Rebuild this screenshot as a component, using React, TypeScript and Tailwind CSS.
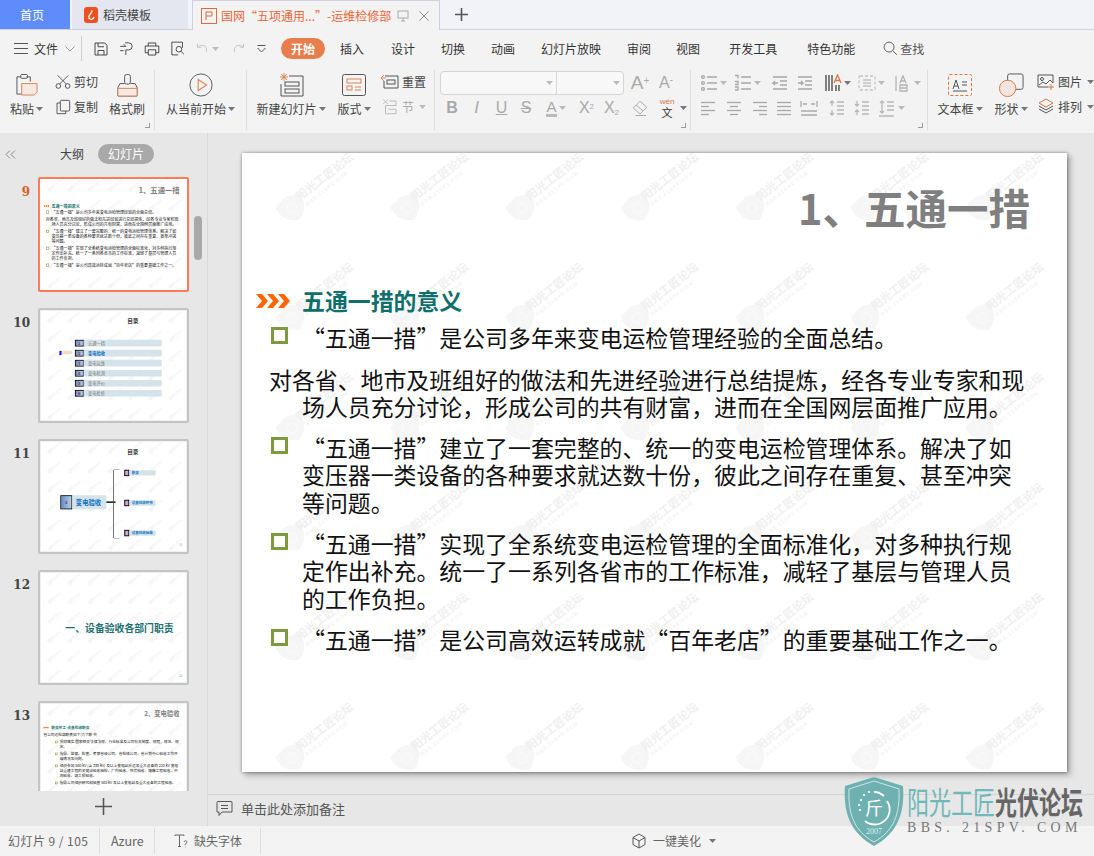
import type { ReactNode } from 'react';

const UI = "font-['Noto_Sans_CJK_SC','Noto_Sans',sans-serif]";

const Svg = ({ children, size = 20, box = 24, cls = 'text-[#444]' }: { children: ReactNode; size?: number; box?: number; cls?: string }) => (
	<svg width={size} height={size} viewBox={`0 0 ${box} ${box}`} fill="none" stroke="currentColor" strokeWidth={1.3} className={`shrink-0 ${cls}`}>
		{children}
	</svg>
);

const Caret = ({ light = false }: { light?: boolean }) => (
	<svg width="7" height="4" viewBox="0 0 7 4" className={`ml-[2px] shrink-0 ${light ? 'text-[#bbb]' : 'text-[#777]'}`}>
		<path d="M0 0h7L3.5 4z" fill="currentColor" />
	</svg>
);

// horizontal line icons for the paragraph group
const Lines = ({ rows }: { rows: [number, number][] }) => (
	<Svg size={18} box={18} cls="text-[#a8a8a8]">
		{rows.map(([a, b], i) => (
			<path key={i} d={`M${a} ${3.5 + i * (12 / (rows.length - 1))}H${b}`} />
		))}
	</Svg>
);

const Big = ({ icon, label, width, caret = true, light = false }: { icon: ReactNode; label: string; width: string; caret?: boolean; light?: boolean }) => (
	<div className={`flex flex-col items-center shrink-0 ${width}`}>
		<div className="h-[30px] flex items-center justify-center">{icon}</div>
		<div className={`h-[18px] flex items-center text-[12px] whitespace-nowrap ${light ? 'text-[#aaa]' : 'text-[#444]'}`}>
			{label}
			{caret && <Caret />}
		</div>
	</div>
);

const Small = ({ icon, label, light = false, caret = false }: { icon: ReactNode; label: string; light?: boolean; caret?: boolean }) => (
	<div className={`h-[25px] pb-[1px] flex items-center gap-[3px] text-[12px] whitespace-nowrap ${light ? 'text-[#aaa]' : 'text-[#444]'}`}>
		{icon}
		{label}
		{caret && <Caret light={light} />}
	</div>
);

const Cell = ({ w, children, caret = false, dark = false }: { w: string; children: ReactNode; caret?: boolean; dark?: boolean }) => (
	<div className={`h-[25px] flex items-center justify-start shrink-0 ${w}`}>
		{children}
		{caret && <Caret light={!dark} />}
	</div>
);

const FontCell = ({ w, children, caret = false }: { w: string; children: ReactNode; caret?: boolean }) => (
	<div className={`h-[25px] flex items-center justify-center shrink-0 ${w}`}>
		{children}
		{caret && <Caret light />}
	</div>
);

const Glyph = ({ children, cls = '' }: { children: ReactNode; cls?: string }) => (
	<span className={`text-[#a9a9a9] font-['Liberation_Sans',sans-serif] leading-none ${cls}`}>{children}</span>
);

const Launcher = () => <div className="absolute right-[4px] bottom-[2px] w-[5px] h-[5px] border-r border-b border-[#999]" />;

const TabBar = () => (
	<div className="h-[30px] flex bg-[#f2f3f8] border-b border-[#cfcfdf] text-[12px]">
		<div className="w-[70px] pr-[6px] bg-[#5e8dfb] text-white flex items-center justify-center text-[12px]">首页</div>
		<div className="w-[116px] ml-[2px] bg-[#e4e7ef] text-[#444] flex items-center pl-[12px] gap-[5px]">
			<svg width="14" height="16" viewBox="0 0 14 16">
				<rect width="14" height="16" rx="3" fill="#f0501e" />
				<path d="M8 3C9 6 4 7 5 11c1 2 4 2 5-1" stroke="#fff" strokeWidth="1.4" fill="none" />
			</svg>
			稻壳模板
		</div>
		<div className="w-[248px] ml-[4px] h-[30px] bg-[#f3f3f3] border border-b-0 border-[#cfcfdf] flex items-center pl-[8px] text-[#e8663a] whitespace-nowrap">
			<svg width="16" height="16" viewBox="0 0 16 16" fill="none" stroke="#e8663a" className="mr-[4px]">
				<rect x=".5" y=".5" width="15" height="15" />
				<path d="M5 12V4h6v4H5" />
			</svg>
			国网“五项通用...”-运维检修部
			<svg width="12" height="12" viewBox="0 0 12 12" fill="none" stroke="#aaa" className="ml-[6px]">
				<rect x="1" y="1" width="10" height="7" />
				<path d="M6 8v3M4 11h4" />
			</svg>
			<svg width="10" height="10" viewBox="0 0 10 10" fill="none" stroke="#888" className="ml-[10px]">
				<path d="M.5.5l9 9M9.5.5l-9 9" />
			</svg>
		</div>
		<div className="ml-[15px] flex items-center">
			<svg width="13" height="13" viewBox="0 0 13 13" stroke="#555" strokeWidth="1.6">
				<path d="M6.5 0v13M0 6.5h13" />
			</svg>
		</div>
	</div>
);

const MenuBar = () => (
	<div className="h-[37px] flex items-center text-[12px] text-[#333] whitespace-nowrap">
		<svg width="14" height="11" viewBox="0 0 14 11" stroke="#555" className="ml-[14px]">
			<path d="M0 .5h14M0 5.5h14M0 10.5h14" />
		</svg>
		<span className="ml-[6px]">文件</span>
		<svg width="10" height="6" viewBox="0 0 10 6" fill="none" stroke="#999" className="ml-[7px]">
			<path d="M.5.5L5 5 9.5.5" />
		</svg>
		<div className="w-px h-[25px] bg-[#ccc] ml-[6px] mr-[10px]" />
		<div className="flex items-center gap-[8px]">
			<Svg size={18}>
				<path d="M4 4h13l3 3v13H4zM8 4v5h8M8 20v-6h8v6" />
			</Svg>
			<Svg size={17}>
				<path d="M10 4h5a5 5 0 010 10h-4v7M3 9h8l-3-3M3 15h5" />
			</Svg>
			<Svg size={18}>
				<path d="M7 8V4h10v4M3 8h18v9h-4M7 17H3V8M7 13h10v7H7z" />
			</Svg>
			<Svg size={17}>
				<path d="M19 11V3H4v18h9" />
				<circle cx="14" cy="13" r="4" />
				<path d="M17 16l4 4" />
			</Svg>
		</div>
		<div className="flex items-center ml-[9px] text-[#bbb]">
			<Svg size={15} cls="text-[#bbb]">
				<path d="M4 4v6h6M4 10c6-6 17-3 14 8" />
			</Svg>
			<Caret light />
			<div className="ml-[12px]">
				<Svg size={15} cls="text-[#bbb]">
					<path d="M20 4v6h-6M20 10C14 4 3 7 6 18" />
				</Svg>
			</div>
		</div>
		<svg width="9" height="8" viewBox="0 0 9 8" fill="none" stroke="#555" className="ml-[11px]">
			<path d="M.5.5h8M.5 3l4 4 4-4" />
		</svg>
		<div className="ml-[15px] w-[44px] h-[21px] rounded-full bg-[#e97e4d] text-white font-bold flex items-center justify-center">开始</div>
		<div className="flex">
			<span className="ml-[15px]">插入</span>
			<span className="ml-[27px]">设计</span>
			<span className="ml-[26px]">切换</span>
			<span className="ml-[26px]">动画</span>
			<span className="ml-[26px]">幻灯片放映</span>
			<span className="ml-[26px]">审阅</span>
			<span className="ml-[25px]">视图</span>
			<span className="ml-[29px]">开发工具</span>
			<span className="ml-[30px]">特色功能</span>
		</div>
		<div className="ml-[27px] flex items-center gap-[1px] text-[#555]">
			<Svg size={17} cls="text-[#555]">
				<circle cx="10" cy="10" r="7" />
				<path d="M15 15l6 6" />
			</Svg>
			查找
		</div>
	</div>
);

const Ribbon = () => (
	<div className="h-[66px] flex relative">
		{/* clipboard */}
		<div className="relative w-[155px] shrink-0 border-r border-[#ddd] my-[3px] flex pl-[3px]">
			<Big
				width="w-[47px]"
				label="粘贴"
				icon={
					<svg width="23" height="22" viewBox="0 0 24 23" fill="none" stroke="#555">
						<path d="M6 3H2v18h8M16 8V3h-4" />
						<rect x="6" y=".5" width="7" height="4" rx="1" />
						<path d="M7 10h16v9l-3 3H7z" fill="#f5e9e2" stroke="#d98552" />
					</svg>
				}
			/>
			<div className="w-[53px] pl-[5px]">
				<Small
					label="剪切"
					icon={
						<Svg size={16}>
							<circle cx="5" cy="18" r="3.500" />
							<circle cx="19" cy="18" r="3.500" />
							<path d="M7 15L20 2M17 15L4 2" />
						</Svg>
					}
				/>
				<Small
					label="复制"
					icon={
						<Svg size={16}>
							<rect x="8" y="2" width="14" height="16" rx="1.5" />
							<path d="M8 6H3v16h13v-4" />
						</Svg>
					}
				/>
			</div>
			<div className="ml-[2px]">
				<Big
					width="w-[44px]"
					label="格式刷"
					caret={false}
					icon={
						<svg width="21" height="23" viewBox="0 0 22 24" fill="none" stroke="#555">
							<rect x="8" y=".5" width="6" height="10" rx="2" />
							<path d="M8 10H3L1 14v9h20v-9l-2-4h-5" />
							<path d="M1 15h20v8H1z" fill="#f5e9e2" stroke="#d98552" />
						</svg>
					}
				/>
			</div>
			<Launcher />
		</div>
		{/* slide show */}
		<div className="w-[92px] shrink-0 border-r border-[#ddd] my-[3px] flex justify-center">
			<Big
				width="w-[80px]"
				label="从当前开始"
				icon={
					<svg width="24" height="24" viewBox="0 0 26 26" fill="none">
						<circle cx="13" cy="13" r="12" stroke="#555" />
						<path d="M10 7l9 6-9 6z" stroke="#e08a58" strokeWidth="1.3" />
					</svg>
				}
			/>
		</div>
		{/* slides */}
		<div className="w-[188px] shrink-0 border-r border-[#ddd] my-[3px] flex pl-[8px]">
			<Big
				width="w-[72px]"
				label="新建幻灯片"
				icon={
					<svg width="25" height="24" viewBox="0 0 25 24" fill="none" stroke="#555">
						<path d="M10 3h14v20H2V11" />
						<rect x="6" y="9" width="14" height="4" />
						<rect x="6" y="16" width="14" height="4" />
						<path d="M5 0v8M1 4h8M2 1l6 6M8 1L2 7" stroke="#d98552" />
					</svg>
				}
			/>
			<div className="ml-[7px]">
				<Big
					width="w-[40px]"
					label="版式"
					icon={
						<svg width="24" height="22" viewBox="0 0 24 22" fill="none" stroke="#555">
							<rect x=".5" y=".5" width="23" height="21" rx="2" />
							<rect x="5" y="5" width="14" height="4" stroke="#d98552" />
							<rect x="5" y="12" width="5" height="4" stroke="#d98552" />
							<path d="M13 13h6M13 16h6" stroke="#d98552" />
						</svg>
					}
				/>
			</div>
			<div className="ml-[7px]">
				<Small
					label="重置"
					icon={
						<svg width="18" height="18" viewBox="0 0 18 18" fill="none" stroke="#555">
							<path d="M4 3h13v12H3V8" />
							<rect x="6" y="7" width="8" height="4" />
							<path d="M0 5h5M3 2L0 5l3 3" stroke="#d98552" />
						</svg>
					}
				/>
				<Small
					light
					caret
					label="节"
					icon={
						<Svg size={18} cls="text-[#bbb]">
							<path d="M3 2l6 6M9 2L3 8M11 4h9v6H6v11h14v-6H10" />
						</Svg>
					}
				/>
			</div>
		</div>
		{/* font */}
		<div className="relative w-[256px] shrink-0 border-r border-[#ddd] my-[3px] pl-[5px]">
			<div className="h-[25px] flex items-center">
				<div className="w-[184px] h-[24px] flex rounded-[4px] border border-[#d5d5d5] bg-[#f8f8f8]">
					<div className="w-[116px] border-r border-[#d5d5d5] flex items-center justify-end pr-[3px]">
						<Caret light />
					</div>
					<div className="flex-1 flex items-center justify-end pr-[3px]">
						<Caret light />
					</div>
				</div>
				<div className="w-[28px] ml-[2px] flex justify-center text-[#aaa] font-['Liberation_Sans',sans-serif]">
					<span className="text-[19px] leading-none font-light">
						A<sup className="text-[10px]">+</sup>
					</span>
				</div>
				<div className="w-[24px] flex justify-center text-[#aaa] font-['Liberation_Sans',sans-serif]">
					<span className="text-[16px] leading-none">
						A<sup className="text-[10px]">-</sup>
					</span>
				</div>
			</div>
			<div className="h-[25px] flex items-center">
				<FontCell w="w-[24px]">
					<Glyph cls="font-bold text-[16px]">B</Glyph>
				</FontCell>
				<FontCell w="w-[25px]">
					<Glyph cls="italic text-[17px]">I</Glyph>
				</FontCell>
				<FontCell w="w-[25px]">
					<Glyph cls="underline text-[16px]">U</Glyph>
				</FontCell>
				<FontCell w="w-[24px]">
					<Glyph cls="line-through text-[16px]">S</Glyph>
				</FontCell>
				<FontCell w="w-[36px]" caret>
					<Glyph cls="text-[15px] border-b-[3px] border-[#bbb]">A</Glyph>
				</FontCell>
				<FontCell w="w-[25px]">
					<Glyph cls="text-[16px]">
						X<sup className="text-[8px]">2</sup>
					</Glyph>
				</FontCell>
				<FontCell w="w-[25px]">
					<Glyph cls="text-[16px]">
						X<sub className="text-[8px]">2</sub>
					</Glyph>
				</FontCell>
				<FontCell w="w-[32px]">
					<Svg size={18} cls="text-[#aaa]">
						<path d="M12 3l9 8-9 9-9-8zM7 8l9 8M6 22h14" />
					</Svg>
				</FontCell>
				<FontCell w="w-[22px]">
					<div className="flex flex-col items-center">
						<span className="text-[8px] leading-[9px] text-[#d9773f] font-['Liberation_Sans',sans-serif]">wén</span>
						<span className="text-[11px] leading-[12px] text-[#333]">文</span>
					</div>
				</FontCell>
				<Caret />
			</div>
			<Launcher />
		</div>
		{/* paragraph */}
		<div className="relative w-[237px] shrink-0 border-r border-[#ddd] my-[3px] pl-[9px]">
			<div className="flex">
				<Cell w="w-[34px]" caret>
					<Svg size={18} box={18} cls="text-[#a8a8a8]">
						<circle cx="3" cy="3" r="1.400" />
						<circle cx="3" cy="9" r="1.400" />
						<circle cx="3" cy="15" r="1.400" />
						<path d="M7 3h10M7 9h10M7 15h10" />
					</Svg>
				</Cell>
				<Cell w="w-[37px]" caret>
					<Svg size={18} box={18} cls="text-[#a8a8a8]">
						<path d="M1 1.500h3v3M1 7.500h3v3H1M1 13h3v3H1M7 3h10M7 9h10M7 15h10" />
					</Svg>
				</Cell>
				<Cell w="w-[25px]">
					<Svg size={18} box={18} cls="text-[#a8a8a8]">
						<path d="M2 3h14M9 7h7M9 11h7M2 15h14M7 9H2l2-2M2 9l2 2" />
					</Svg>
				</Cell>
				<Cell w="w-[28px]">
					<Svg size={18} box={18} cls="text-[#a8a8a8]">
						<path d="M2 3h14M9 7h7M9 11h7M2 15h14M2 9h5l-2-2M7 9l-2 2" />
					</Svg>
				</Cell>
				<Cell w="w-[34px]" caret dark>
					<Svg size={18} box={18} cls="text-[#444]">
						<path d="M2 1v16M5 1v16M8 1v16M12 11v6M15 11v6" />
						<path d="M10 9l3.500-8L17 9M11 6.500h5" stroke="#d9773f" />
					</Svg>
				</Cell>
				<Cell w="w-[36px]" caret>
					<Svg size={18} box={18} cls="text-[#c4c4c4]">
						<rect x="1" y="2" width="16" height="14" rx="1" strokeDasharray="3 2" />
						<path d="M5 6h8M5 9h8M5 12h8" />
					</Svg>
				</Cell>
				<Cell w="w-[33px]" caret>
					<Svg size={18} box={18} cls="text-[#b4b4b4]">
						<path d="M2 2v15M6 9l3-7 3 7M7 7h4M6 11h7v6H6zM6 14h7" />
					</Svg>
				</Cell>
			</div>
			<div className="flex">
				<Cell w="w-[25px]">
					<Lines rows={[[1, 15], [1, 9], [1, 15], [1, 9]]} />
				</Cell>
				<Cell w="w-[25px]">
					<Lines rows={[[2, 16], [5, 13], [2, 16], [5, 13]]} />
				</Cell>
				<Cell w="w-[25px]">
					<Lines rows={[[3, 17], [9, 17], [3, 17], [9, 17]]} />
				</Cell>
				<Cell w="w-[25px]">
					<Lines rows={[[2, 16], [2, 16], [2, 16], [2, 16]]} />
				</Cell>
				<Cell w="w-[28px]">
					<Svg size={18} box={18} cls="text-[#aaa]">
						<path d="M1 2v6M17 2v6M3 5h4M15 5h-4M1 12h16M1 16h16" />
					</Svg>
				</Cell>
				<Cell w="w-[25px]">
					<Svg size={18} box={18} cls="text-[#b8b8b8]">
						<path d="M4 2v5M2 4l2-2 2 2M4 11v5M2 14l2 2 2-2M9 3h7M9 7h7M9 11h7M9 15h7" />
					</Svg>
				</Cell>
				<Cell w="w-[25px]">
					<Svg size={18} box={18} cls="text-[#b8b8b8]">
						<path d="M4 2v5M2 5l2 2 2-2M4 11v5M2 13l2-2 2 2M9 3h7M9 7h7M9 11h7M9 15h7" />
					</Svg>
				</Cell>
				<Cell w="w-[34px]" caret>
					<Svg size={18} box={18} cls="text-[#b8b8b8]">
						<path d="M4 2v12M2 4l2-2 2 2M2 12l2 2 2-2M1 17h15M9 3h7M9 7h7M9 11h7" />
					</Svg>
				</Cell>
			</div>
			<Launcher />
		</div>
		{/* insert */}
		<div className="flex my-[3px] pl-[9px]">
			<Big
				width="w-[46px]"
				label="文本框"
				icon={
					<svg width="24" height="22" viewBox="0 0 24 22" fill="none">
						<rect x=".5" y=".5" width="23" height="21" rx="1" stroke="#d9773f" strokeDasharray="3 2" />
						<path d="M5 15l3-9 3 9M6 12h4M14 8h5M14 11h5M5 17h14" stroke="#555" />
					</svg>
				}
			/>
			<div className="ml-[5px]">
				<Big
					width="w-[46px]"
					label="形状"
					icon={
						<svg width="25" height="25" viewBox="0 0 26 26" fill="none">
							<rect x="9" y="1" width="16" height="16" rx="2" stroke="#555" />
							<circle cx="9" cy="16" r="8.500" fill="#f3e6e0" stroke="#d9773f" />
						</svg>
					}
				/>
			</div>
			<div className="ml-[3px]">
				<Small
					label="图片"
					caret
					icon={
						<svg width="18" height="18" viewBox="0 0 18 18" fill="none" stroke="#555">
							<path d="M11 14H1V2h15v8" />
							<circle cx="5" cy="6" r="1.500" />
							<path d="M2 12l4-3 3 2 4-4 3 3" />
							<path d="M14 11v6M11 14h6" stroke="#d9773f" />
						</svg>
					}
				/>
				<Small
					label="排列"
					caret
					icon={
						<svg width="18" height="18" viewBox="0 0 18 18" fill="none" stroke="#555">
							<path d="M9 1l7 4-7 4-7-4z" stroke="#d9773f" />
							<path d="M2 8l7 4 7-4M2 11l7 4 7-4" />
						</svg>
					}
				/>
			</div>
		</div>
	</div>
);

const Mark = () => (
	<svg width="115" height="110" viewBox="0 0 115 110" className="shrink-0">
		<path d="M50 42l14 4c1 10-2 17-14 23-12-6-15-13-14-23z" fill="#f6f6f6" transform="rotate(-30 50 55)" />
		<circle cx="50" cy="55" r="5" fill="none" stroke="#fcfcfc" />
		<text x="0" y="0" transform="translate(58 48) rotate(-38)" fontSize="11.500" fontWeight="700" fill="#f0f0f0" fontFamily="'Noto Sans CJK SC',sans-serif">
			阳光工匠论坛
		</text>
		<text x="0" y="0" transform="translate(65 53) rotate(-38)" fontSize="5" fontWeight="700" fill="#f2f2f2" fontFamily="'Liberation Sans',sans-serif" letterSpacing="1">
			BBS.21SPV.COM
		</text>
	</svg>
);

const Watermark = () => (
	<div className="absolute inset-0 overflow-hidden flex flex-wrap content-start">
		{Array.from({ length: 56 }).map((_, i) => (
			<Mark key={i} />
		))}
	</div>
);

const Bullet = ({ children }: { children: ReactNode }) => (
	<div className="flex mt-[14px] first:mt-0 pl-[29px]">
		<div className="w-[31px] shrink-0 pt-[3px]">
			<div className="w-[17px] h-[17px] border-[3px] border-[#7f9a3c] bg-white" />
		</div>
		<div className="whitespace-nowrap">{children}</div>
	</div>
);

const Chevrons = ({ size = 35 }: { size?: number }) => (
	<svg width={size} height="14" viewBox="0 0 35 14" fill="#ff6600" className="shrink-0">
		<path d="M0 0h6l6 7-6 7H0l6-7zM11 0h6l6 7-6 7h-6l6-7zM22 0h6l6 7-6 7h-6l6-7z" />
	</svg>
);

const SlideNine = () => (
	<div className={`relative w-[825px] h-[619px] bg-white ${UI}`}>
		<Watermark />
		<div className="relative">
			<div className="pt-[30px] pr-[37px] text-right text-[41.5px] leading-[48px] font-bold text-[#7f7f7f]">1、五通一措</div>
			<div className="mt-[56px] pl-[14px] flex items-center text-[22.9px] leading-[27.3px] font-bold text-[#0f6f6b]">
				<Chevrons />
				<span className="ml-[11px]">五通一措的意义</span>
			</div>
			<div className="mt-[10px] text-[22.9px] leading-[27.3px] text-[#111]">
				<Bullet>“五通一措”是公司多年来变电运检管理经验的全面总结。</Bullet>
				<div className="mt-[14px] pl-[60px] -indent-[33px] whitespace-nowrap">
					对各省、地市及班组好的做法和先进经验进行总结提炼，经各专业专家和现
					<br />
					场人员充分讨论，形成公司的共有财富，进而在全国网层面推广应用。
				</div>
				<Bullet>
					“五通一措”建立了一套完整的、统一的变电运检管理体系。解决了如
					<br />
					变压器一类设备的各种要求就达数十份，彼此之间存在重复、甚至冲突
					<br />
					等问题。
				</Bullet>
				<Bullet>
					“五通一措”实现了全系统变电运检管理的全面标准化，对多种执行规
					<br />
					定作出补充。统一了一系列各省市的工作标准，减轻了基层与管理人员
					<br />
					的工作负担。
				</Bullet>
				<Bullet>“五通一措”是公司高效运转成就“百年老店”的重要基础工作之一。</Bullet>
			</div>
		</div>
	</div>
);

const TocRow = ({ n, label, active = false }: { n: number; label: string; active?: boolean }) => (
	<div className="h-[38px] mb-[19px] flex items-center">
		<div className="w-[50px] h-[38px] border-[5px] border-black bg-gradient-to-r from-[#5d8ec9] to-[#b7d0ea] flex items-center justify-center text-[22px] text-[#a0224f] font-bold">{n}</div>
		<div className={`w-[444px] h-[38px] rounded-[8px] bg-[#d5e3ea] pl-[25px] flex items-center text-[24px] ${active ? 'text-[#0a6fc4] font-bold' : 'text-[#777]'}`}>{label}</div>
	</div>
);

const SlideToc = () => (
	<div className={`relative w-[825px] h-[619px] bg-white ${UI}`}>
		<Watermark />
		<div className="relative">
			<div className="pt-[30px] pl-[490px] text-[32px] leading-[44px] font-bold text-[#444]">目录</div>
			<div className="mt-[90px] pl-[193px] relative">
				<TocRow n={1} label="五通一措" />
				<TocRow n={2} label="变电验收" active />
				<TocRow n={3} label="变电运维" />
				<TocRow n={4} label="变电检测" />
				<TocRow n={5} label="变电评价" />
				<TocRow n={6} label="变电检修" />
				<div className="absolute left-[105px] top-[63px] w-[12px] h-[24px] bg-[#1414e0]" />
				<div className="absolute left-[118px] top-[62px] w-[60px] h-[20px] rounded-full bg-[#f2dcc8]" />
			</div>
		</div>
	</div>
);

const Branch = ({ label, top }: { label: string; top: string }) => (
	<div className={`absolute left-[474px] ${top} h-[36px] flex items-center`}>
		<div className="w-[28px] h-[36px] border-[5px] border-black bg-[#c8a8d8]" />
		<div className="w-[150px] h-[30px] rounded-[6px] bg-[#d5e3ea] pl-[14px] flex items-center text-[20px] text-[#0a6fc4] font-bold whitespace-nowrap">{label}</div>
	</div>
);

const SlideTree = () => (
	<div className={`relative w-[825px] h-[619px] bg-white ${UI}`}>
		<Watermark />
		<div className="absolute left-[490px] top-[30px] text-[32px] leading-[44px] font-bold text-[#444]">目录</div>
		<div className="absolute left-[110px] top-[303px] flex h-[80px]">
			<div className="w-[68px] h-[80px] border-[5px] border-black bg-gradient-to-r from-[#5d8ec9] to-[#b7d0ea] flex items-center justify-center text-[22px] text-[#a0224f] font-bold">4</div>
			<div className="w-[194px] rounded-[8px] bg-[#d5e3ea] flex items-center pl-[20px] text-[36px] text-[#0a6fc4] font-bold">变电验收</div>
		</div>
		<div className="absolute left-[372px] top-[338px] w-[52px] h-[8px] bg-black" />
		<div className="absolute left-[410px] top-[155px] w-[38px] h-[395px] rounded-l-[8px] border-[5px] border-r-0 border-[#555]" />
		<Branch label="职责" top="top-[158px]" />
		<Branch label="设备验收环节" top="top-[329px]" />
		<Branch label="设备验收标准" top="top-[500px]" />
		<div className="absolute right-[20px] bottom-[20px] text-[18px] text-[#7ab]">11</div>
	</div>
);

const SlideSection = () => (
	<div className={`relative w-[825px] h-[619px] bg-white flex items-center justify-center pl-[68px] ${UI}`}>
		<Watermark />
		<div className="relative text-[56px] font-bold text-[#1d6f72] whitespace-nowrap">一、设备验收各部门职责</div>
		<div className="absolute right-[20px] bottom-[20px] text-[18px] text-[#7ab]">12</div>
	</div>
);

const MiniBullet = ({ children }: { children: ReactNode }) => (
	<div className="flex mt-[10px] pl-[80px] pr-[40px]">
		<div className="w-[26px] shrink-0 pt-[8px]">
			<div className="w-[14px] h-[14px] border-[3px] border-[#7f9a3c]" />
		</div>
		<div>{children}</div>
	</div>
);

const SlideDuty = () => (
	<div className={`relative w-[825px] h-[619px] bg-white ${UI}`}>
		<Watermark />
		<div className="relative">
			<div className="pt-[28px] pr-[37px] text-right text-[36px] leading-[48px] font-bold text-[#7f7f7f]">2、变电验收</div>
			<div className="mt-[42px] pl-[14px] flex items-center text-[21px] font-bold text-[#0f6f6b]">
				<div className="w-[30px] h-[8px] bg-[#ff8a3c] mr-[14px]" />
				职责关工-设备验收职责
			</div>
			<div className="mt-[10px] pl-[14px] text-[21px] text-[#111]">省公司运检部职责如下(7)下职 共</div>
			<div className="text-[21px] leading-[29px] text-[#111]">
				<MiniBullet>贯彻落实 国家相关法律法规、行业标准及公司有关制度、规程，规范、规定。</MiniBullet>
				<MiniBullet>指导、监督、检查、考察省级公司、省检修公司、省计划中心验收工作开展情况及问题。</MiniBullet>
				<MiniBullet>组织参加 500 kV (含 330 kV) 及以上变电站投运及重大设备的 220 kV 变电站重建工程的关键点验收抽检、厂内验收、到货验收、隐蔽工程验收、中间验收、竣工预验收。</MiniBullet>
				<MiniBullet>指导公司组织研究和抽查 500 kV 及以上变电站及重大设备的工程验收。</MiniBullet>
			</div>
		</div>
	</div>
);

const Thumb = ({ n, active = false, children }: { n: number; active?: boolean; children: ReactNode }) => (
	<div className="flex h-[115px] mb-[16px]">
		<div className={`w-[38px] shrink-0 pr-[8px] pt-[6px] text-right text-[12px] font-bold font-['DejaVu_Serif',serif] ${active ? 'text-[#d4621f]' : 'text-[#444]'}`}>{n}</div>
		<div className={`w-[151px] h-[115px] shrink-0 rounded-[2px] border-2 p-px overflow-hidden ${active ? 'border-[#ff7a59] bg-white' : 'border-[#c4c4c4] bg-[#f0f0f0]'}`}>
			<div className="w-[145px] h-[109px] overflow-hidden">
				<div className="origin-top-left scale-[0.1758] w-[825px] h-[619px]">{children}</div>
			</div>
		</div>
	</div>
);

const SidePanel = () => (
	<div className="relative w-[208px] shrink-0 border-r border-[#d8d8d8] flex flex-col">
		<div className="h-[32px] shrink-0 flex items-center pt-[10px] text-[12px]">
			<svg width="11" height="9" viewBox="0 0 11 9" fill="none" stroke="#888" className="ml-[5px]">
				<path d="M5 .5L1 4.500l4 4M10 .5L6 4.500l4 4" />
			</svg>
			<span className="ml-[44px] text-[#444]">大纲</span>
			<div className="ml-[14px] w-[56px] h-[20px] rounded-full bg-[#a9a9a9] text-white flex items-center justify-center">幻灯片</div>
		</div>
		<div className="h-[626px] shrink-0 overflow-hidden pt-[12px]">
			<Thumb n={9} active>
				<SlideNine />
			</Thumb>
			<Thumb n={10}>
				<SlideToc />
			</Thumb>
			<Thumb n={11}>
				<SlideTree />
			</Thumb>
			<Thumb n={12}>
				<SlideSection />
			</Thumb>
			<Thumb n={13}>
				<SlideDuty />
			</Thumb>
		</div>
		<div className="flex-1 flex items-center justify-center pb-[4px]">
			<svg width="17" height="17" viewBox="0 0 17 17" stroke="#555" strokeWidth="1.600">
				<path d="M8.500 0v17M0 8.500h17" />
			</svg>
		</div>
		<div className="absolute left-[194px] top-[83px] w-[8px] h-[44px] rounded-full bg-[#a9a9a9]" />
	</div>
);

const Logo = () => (
	<div className="absolute left-[844px] top-[777px] flex">
		<svg width="60" height="69" viewBox="0 0 60 69">
			<path d="M30 0l29 9c2 28-6 47-29 60C7 56-1 37 1 9z" fill="#6fb1b1" />
			<path d="M30 4l25 8c1 25-5 42-25 53C10 54 4 37 5 12z" fill="none" stroke="#cfe5e5" />
			<path d="M43 24a15 15 0 01-22 20" fill="none" stroke="#fff" strokeWidth="1.800" />
			<path d="M30 15a15 15 0 0110 4" fill="none" stroke="#fff" strokeWidth="1.800" />
			<g fill="#fff">
				<circle cx="25" cy="15" r="1.100" />
				<circle cx="20" cy="18" r="1.100" />
				<circle cx="17" cy="23" r="1.100" />
				<circle cx="15" cy="28" r="1.100" />
				<circle cx="16" cy="33" r="1.100" />
			</g>
			<text x="30" y="38" textAnchor="middle" fontSize="18" fill="#fff" fontFamily="'Noto Sans CJK SC',sans-serif">斤</text>
			<text x="30" y="57" textAnchor="middle" fontSize="8" fill="#dceeee" fontFamily="'Liberation Serif',serif">2007</text>
		</svg>
		<div className="ml-[3px] w-[180px] pt-[5px]">
			<div className="h-[36px] flex items-center text-[22px] whitespace-nowrap origin-center scale-y-[1.4] leading-none">
				<span className="text-[#6fb9b9]">阳光工匠</span>
				<span className="text-[#666] font-bold">光伏论坛</span>
			</div>
			<div className="mt-[3px] text-[14px] leading-[14px] tracking-[4.3px] text-[#777] font-['Liberation_Serif',serif] whitespace-nowrap">BBS. 21SPV. COM</div>
		</div>
	</div>
);

const StatusBar = () => (
	<div className="h-[30px] bg-[#f3f3f3] relative flex items-center text-[12px] text-[#666]">
		<div className="w-[100px] h-[26px] border-r border-[#ddd] flex items-center pl-[8px] tracking-[0.45px] whitespace-nowrap">幻灯片 9 / 105</div>
		<div className="w-[55px] h-[26px] border-r border-[#ddd] flex items-center pl-[11px] text-[12.5px]">Azure</div>
		<div className="w-[106px] h-[26px] border-r border-[#ddd] flex items-center pl-[19px] gap-[6px] whitespace-nowrap">
			<svg width="14" height="14" viewBox="0 0 14 14" fill="none" stroke="#666">
				<path d="M1 2V1h9v1M5.500 1v11M4 12.500h3M10 8c1-2 3-1 3 0s-2 1.500-2 3M11 13h.5" />
			</svg>
			缺失字体
		</div>
		<div className="ml-[370px] flex items-center gap-[6px] whitespace-nowrap">
			<svg width="16" height="16" viewBox="0 0 16 16" fill="none" stroke="#555">
				<path d="M8 1l6 3.500v7L8 15l-6-3.500v-7zM2 4.500L8 8l6-3.500M8 8v7" />
			</svg>
			一键美化
			<Caret />
		</div>
	</div>
);

const App = () => (
	<div className={`relative w-[1094px] h-[856px] overflow-hidden bg-[#e7e7e7] ${UI}`}>
		<TabBar />
		<div className="bg-[#f3f3f3]">
			<MenuBar />
			<Ribbon />
		</div>
		<div className="flex h-[693px]">
			<SidePanel />
			<div className="flex-1 flex flex-col">
				<div className="h-[661px] pl-[34px] pt-[20px]">
					<div className="w-[825px] h-[619px] shadow-[0_0_3px_rgba(0,0,0,0.4),3px_3px_6px_rgba(0,0,0,0.3)]">
						<SlideNine />
					</div>
				</div>
				<div className="flex-1 border-t border-[#d4d4d4] flex items-center pl-[8px] pb-[4px] gap-[8px] text-[13px] text-[#555]">
					<svg width="17" height="17" viewBox="0 0 17 17" fill="none" stroke="#555">
						<path d="M2 1.500h13a1 1 0 011 1V12H6l-3 3.500V12H1V2.500a1 1 0 011-1zM5 5.500h7M5 8.500h7" />
					</svg>
					单击此处添加备注
				</div>
			</div>
		</div>
		<StatusBar />
		<Logo />
	</div>
);

export default App;
